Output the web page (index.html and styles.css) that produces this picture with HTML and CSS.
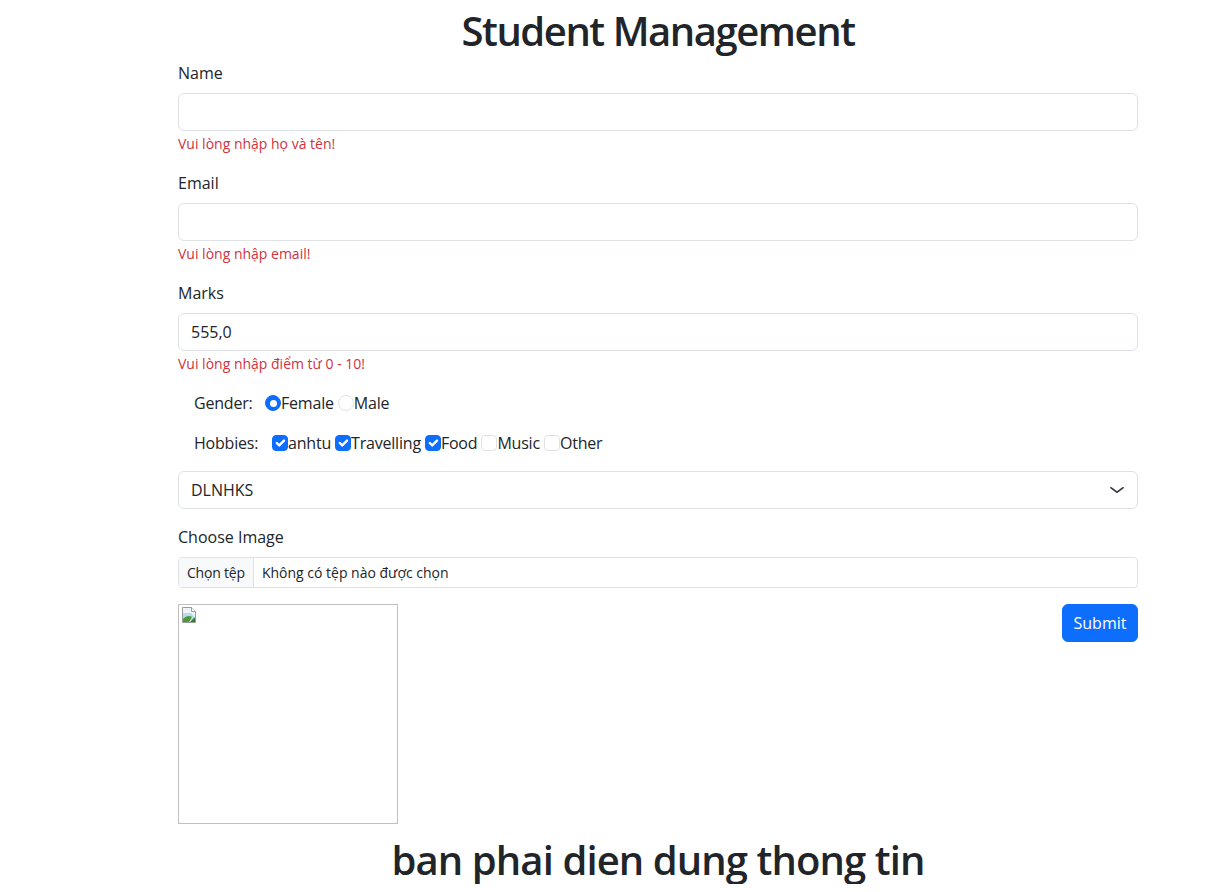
FILE: index.html
```html
<!DOCTYPE html>
<html lang="vi">
<head>
<meta charset="utf-8">
<title>Student Management</title>
<link rel="stylesheet" href="styles.css">
</head>
<body>
<div class="page">
  <h1 class="title">Student Management</h1>
  <form class="form">
    <div class="field">
      <label class="label">Name</label>
      <input class="control" type="text">
      <div class="error">Vui lòng nhập họ và tên!</div>
    </div>
    <div class="field">
      <label class="label">Email</label>
      <input class="control" type="text">
      <div class="error">Vui lòng nhập email!</div>
    </div>
    <div class="field">
      <label class="label">Marks</label>
      <input class="control" type="text" value="555,0">
      <div class="error">Vui lòng nhập điểm từ 0 - 10!</div>
    </div>
    <div class="choice-row">
      <span class="row-label gender-label">Gender:</span>
      <span class="opt"><span class="radio on"></span>Female</span>
      <span class="opt"><span class="radio"></span>Male</span>
    </div>
    <div class="choice-row">
      <span class="row-label hobby-label">Hobbies:</span>
      <span class="opt"><span class="check on"><svg viewBox="0 0 20 20" width="16" height="16"><path d="M6 10l3 3 6-6" fill="none" stroke="#fff" stroke-width="3" stroke-linecap="round" stroke-linejoin="round"/></svg></span>anhtu</span>
      <span class="opt"><span class="check on"><svg viewBox="0 0 20 20" width="16" height="16"><path d="M6 10l3 3 6-6" fill="none" stroke="#fff" stroke-width="3" stroke-linecap="round" stroke-linejoin="round"/></svg></span>Travelling</span>
      <span class="opt"><span class="check on"><svg viewBox="0 0 20 20" width="16" height="16"><path d="M6 10l3 3 6-6" fill="none" stroke="#fff" stroke-width="3" stroke-linecap="round" stroke-linejoin="round"/></svg></span>Food</span>
      <span class="opt"><span class="check"></span>Music</span>
      <span class="opt"><span class="check"></span>Other</span>
    </div>
    <div class="select-wrap">
      <select class="select"><option>DLNHKS</option></select>
      <svg class="chevron" viewBox="0 0 16 16" width="16" height="12" preserveAspectRatio="none"><path d="M2 5l6 6 6-6" fill="none" stroke="#343a40" stroke-width="2" stroke-linecap="round" stroke-linejoin="round"/></svg>
    </div>
    <div class="field-plain">
      <label class="label">Choose Image</label>
      <div class="file">
        <span class="file-btn">Chọn tệp</span>
        <span class="file-name">Không có tệp nào được chọn</span>
      </div>
    </div>
    <div class="preview-row">
      <div class="broken">
        <svg width="16" height="16" viewBox="0 0 16 16">
          <path d="M1.5 0.5h9l4 4v11h-13z" fill="#eef4fa" stroke="#9a9a9a"/>
          <path d="M10.5 0.5v4h4" fill="#fff" stroke="#9a9a9a"/>
          <path d="M2 6h8l3 3v4H2z" fill="#bcd7f0"/>
          <path d="M2 15V12c3-3 6-4 9-2l-3 5z" fill="#4a9a3a"/>
          <path d="M9 15l5-5v5z" fill="#2f7d2a"/>
        </svg>
      </div>
      <button type="button" class="submit">Submit</button>
    </div>
  </form>
  <h1 class="footer-msg">ban phai dien dung thong tin</h1>
</div>
</body>
</html>
```
FILE: styles.css
```css
* { box-sizing: border-box; }
body {
  margin: 0;
  font-family: "Open Sans", "Noto Sans", "Liberation Sans", sans-serif;
  font-size: 16px;
  line-height: 24px;
  color: #212529;
  background: #fff;
}
.page {
  width: 960px;
  margin-left: 178px;
  padding-top: 7px;
}
.title {
  margin: 0 0 6px;
  font-size: 40px;
  line-height: 48px;
  font-weight: 600;
  text-align: center;
  letter-spacing: -1.45px;
}
.field { margin-bottom: 15px; }
.field-plain { margin-bottom: 16px; }
.label {
  display: block;
  margin-bottom: 8px;
  font-size: 16px;
  line-height: 24px;
}
.control {
  display: block;
  width: 100%;
  height: 38px;
  padding: 6px 12px;
  border: 1px solid #dee2e6;
  border-radius: 6px;
  font: inherit;
  color: #212529;
  background: #fff;
}
.error {
  margin-top: 3px;
  height: 22px;
  font-size: 14px;
  line-height: 20px;
  color: #d0323f;
}
.choice-row {
  display: flex;
  align-items: center;
  height: 24px;
  padding-left: 16px;
  margin-bottom: 16px;
  letter-spacing: -0.2px;
}
.row-label { flex: none; }
.gender-label { width: 71px; }
.hobby-label { width: 78px; }
.opt {
  display: inline-flex;
  align-items: center;
  margin-right: 4px;
}
.radio, .check {
  display: inline-flex;
  align-items: center;
  justify-content: center;
  width: 16px;
  height: 16px;
  border: 1px solid #dee2e6;
  background: #fff;
  flex: none;
}
.radio { border-radius: 50%; }
.radio.on {
  background: #0d6efd;
  border-color: #0d6efd;
}
.radio.on::after {
  content: "";
  width: 7px;
  height: 7px;
  border-radius: 50%;
  background: #fff;
}
.check { border-radius: 4px; }
.check.on {
  background: #0d6efd;
  border-color: #0d6efd;
}
.check svg { display: block; flex: none; }
.select-wrap {
  position: relative;
  margin-bottom: 16px;
}
.select {
  display: block;
  width: 100%;
  height: 38px;
  padding: 6px 36px 6px 12px;
  border: 1px solid #dee2e6;
  border-radius: 6px;
  font: inherit;
  color: #212529;
  background: #fff;
  appearance: none;
  -webkit-appearance: none;
}
.chevron {
  position: absolute;
  right: 13px;
  top: 13px;
  pointer-events: none;
}
.file {
  display: flex;
  height: 31px;
  border: 1px solid #dee2e6;
  border-radius: 4px;
  overflow: hidden;
  font-size: 14px;
  line-height: 21px;
}
.file-btn {
  display: flex;
  align-items: center;
  padding: 0 8px;
  background: #f8f9fa;
  border-right: 1px solid #dee2e6;
  letter-spacing: -0.2px;
}
.file-name {
  display: flex;
  align-items: center;
  padding: 0 8px;
}
.preview-row {
  display: flex;
  justify-content: space-between;
  align-items: flex-start;
}
.broken {
  width: 220px;
  height: 220px;
  border: 1px solid #c0c0c0;
  padding: 2px 0 0 2px;
}
.broken svg { display: block; }
.submit {
  width: 76px;
  height: 38px;
  border: 1px solid #0d6efd;
  border-radius: 6px;
  background: #0d6efd;
  color: #fff;
  font: inherit;
  padding: 0;
}
.footer-msg {
  margin: 12px 0 0;
  font-size: 40px;
  line-height: 48px;
  font-weight: 600;
  text-align: center;
  letter-spacing: -0.9px;
}
```
